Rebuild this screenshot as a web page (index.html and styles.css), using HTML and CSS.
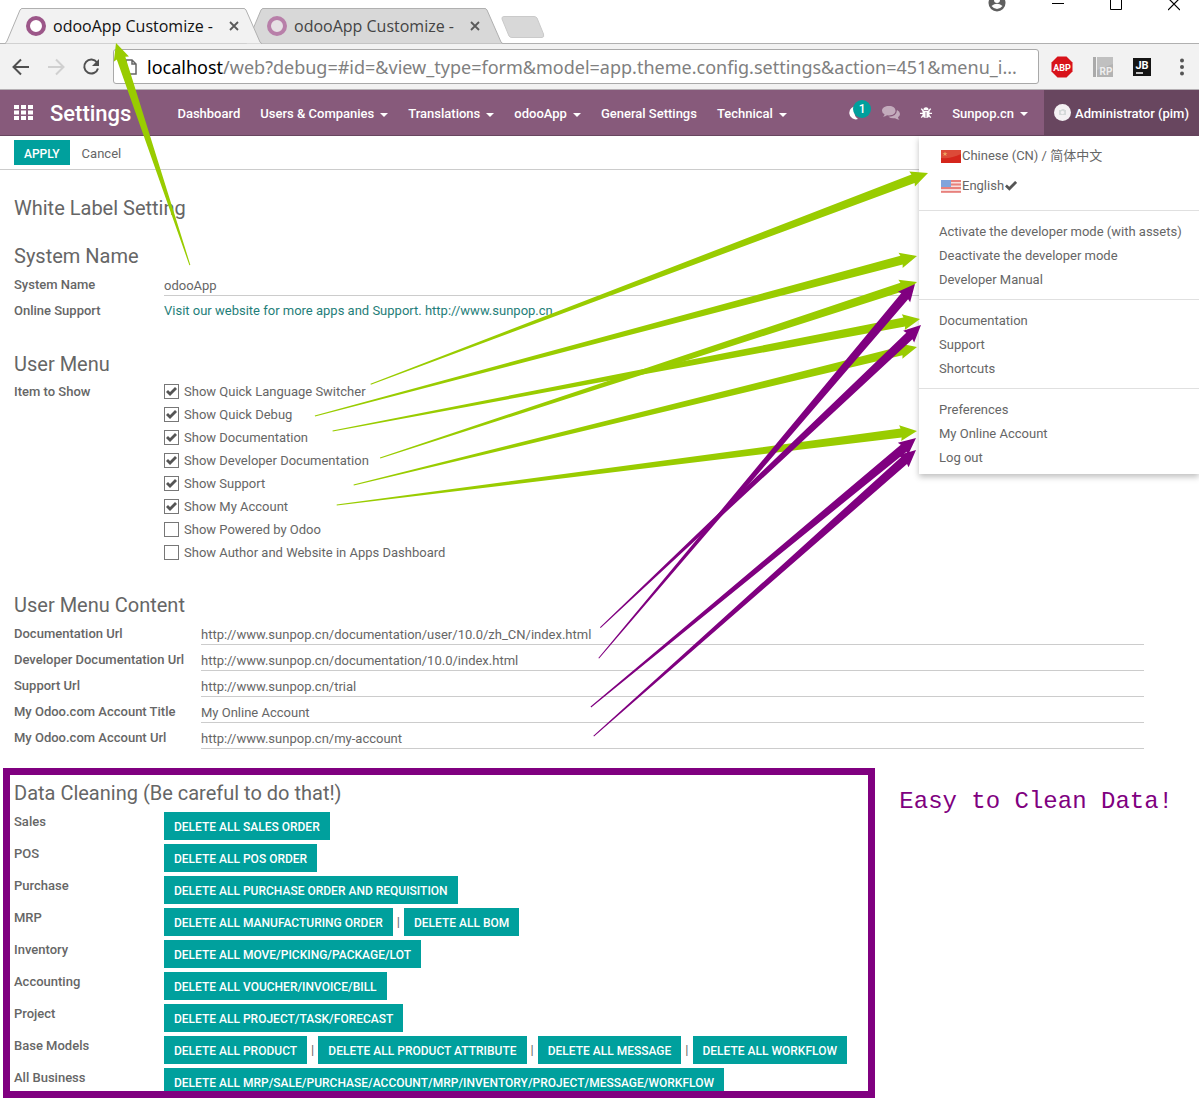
FILE: index.html
```html
<!DOCTYPE html>
<html lang="en">
<head>
<meta charset="utf-8">
<title>odooApp Customize - Settings</title>
<link rel="stylesheet" href="styles.css">
</head>
<body>
<svg width="0" height="0" class="defs" aria-hidden="true">
  <symbol id="tab-shape" viewBox="0 0 257 44" preserveAspectRatio="none"><path d="M0 43.500Q1 43 2 41L15 10Q16 8.500 17 8.500H239Q240 8.500 241 10L255 42Q256 43.500 257 43.500"/></symbol>
  <symbol id="close-x" viewBox="0 0 10 10"><path d="M1 1L9 9M9 1L1 9" fill="none" stroke="#5a5a5a" stroke-width="1.800"/></symbol>
</svg>

<header class="browser">
  <div class="tabstrip">
    <div class="tab tab-active">
      <svg class="tab-bg" aria-hidden="true"><use href="#tab-shape"/></svg>
      <span class="ring"></span><span class="tab-title">odooApp Customize -</span>
      <button class="tab-close" aria-label="Close tab"><svg width="10" height="10"><use href="#close-x"/></svg></button>
    </div>
    <div class="tab">
      <svg class="tab-bg" aria-hidden="true"><use href="#tab-shape"/></svg>
      <span class="ring ring-dim"></span><span class="tab-title">odooApp Customize -</span>
      <button class="tab-close" aria-label="Close tab"><svg width="10" height="10"><use href="#close-x"/></svg></button>
    </div>
    <button class="new-tab" aria-label="New tab"><svg width="44" height="22" viewBox="0 0 44 22"><path d="M3 .500H33Q35 .500 36 2L42.500 18Q43.500 21.500 41 21.500H11Q9 21.500 8 20L1 3Q.500 .500 3 .500Z" fill="#d8d8d8" stroke="#cacaca"/></svg></button>
    <div class="window-controls">
      <button aria-label="Profile"><svg width="18" height="22" viewBox="0 0 18 22"><circle cx="9" cy="3" r="8.500" fill="#5f5f5f"/><circle cx="9" cy="0" r="3" fill="#fff"/><path d="M3.500 6Q9 1.500 14.500 6Q12 9 9 9T3.500 6Z" fill="#fff"/></svg></button>
      <button aria-label="Minimize"><svg width="12" height="22" viewBox="0 0 12 22"><path d="M0 3.500H12" stroke="#000"/></svg></button>
      <button aria-label="Maximize"><svg width="12" height="22" viewBox="0 0 12 22"><path d="M.500 -2V9.500H11.500V-2" fill="none" stroke="#000"/></svg></button>
      <button aria-label="Close window"><svg width="12" height="22" viewBox="0 0 12 22"><path d="M0 -2L12 10M12 -2L0 10" stroke="#000" stroke-width="1.200"/></svg></button>
    </div>
  </div>
  <div class="toolbar">
    <button class="tool" aria-label="Back"><svg width="18" height="18" viewBox="0 0 18 18"><path d="M17 9H2M9 1.500L1.500 9L9 16.500" fill="none" stroke="#505050" stroke-width="2"/></svg></button>
    <button class="tool" aria-label="Forward"><svg width="18" height="18" viewBox="0 0 18 18"><path d="M1 9H16M9 1.500L16.500 9L9 16.500" fill="none" stroke="#d0d0d0" stroke-width="2"/></svg></button>
    <button class="tool" aria-label="Reload"><svg width="18" height="18" viewBox="0 0 18 18"><path d="M15 4.500A7 7 0 1 0 16 10.500" fill="none" stroke="#505050" stroke-width="2"/><path d="M17 1V8H10Z" fill="#505050"/></svg></button>
    <div class="address">
      <svg width="12" height="16" viewBox="0 0 12 16"><path d="M1 1H7L11 5V15H1ZM7 1V5H11" fill="none" stroke="#666" stroke-width="1.500"/></svg>
      <div class="url"><b>localhost</b>/web?debug=#id=&amp;view_type=form&amp;model=app.theme.config.settings&amp;action=451&amp;menu_i...</div>
    </div>
    <div class="extensions">
      <svg width="22" height="22" viewBox="0 0 22 22"><path d="M6.500 .500H15.500L21.500 6.500V15.500L15.500 21.500H6.500L.500 15.500V6.500Z" fill="#d8121a"/><text x="11" y="15" class="abp">ABP</text></svg>
      <svg width="22" height="22" viewBox="0 0 22 22"><path d="M1 1H4V21H1Z" fill="#aaa"/><path d="M5 1H21V21H5Z" fill="#b3b3b3"/><path d="M5 1H21V8L5 14Z" fill="#c0c0c0"/><text x="14" y="19" class="rp">RP</text></svg>
      <svg width="18" height="18" viewBox="0 0 18 18"><path d="M0 0H18V18H0Z" fill="#151515"/><text x="9" y="11" class="jb">JB</text><path d="M3 15H10" stroke="#fff" stroke-width="1.500"/></svg>
      <button class="tool more" aria-label="More"><svg width="4" height="18" viewBox="0 0 4 18"><circle cx="2" cy="2.500" r="2" fill="#555"/><circle cx="2" cy="9" r="2" fill="#555"/><circle cx="2" cy="15.500" r="2" fill="#555"/></svg></button>
    </div>
  </div>
</header>

<nav class="navbar">
  <button class="apps" aria-label="Apps"><svg width="19" height="15" viewBox="0 0 19 15" fill="#fff"><path d="M0 0H5V4H0ZM7 0H12V4H7ZM14 0H19V4H14ZM0 5.500H5V9.500H0ZM7 5.500H12V9.500H7ZM14 5.500H19V9.500H14ZM0 11H5V15H0ZM7 11H12V15H7ZM14 11H19V15H14Z"/></svg></button>
  <a class="brand" href="#">Settings</a>
  <ul class="menu">
    <li><a href="#">Dashboard</a></li>
    <li><a href="#" class="caret">Users &amp; Companies</a></li>
    <li><a href="#" class="caret">Translations</a></li>
    <li><a href="#" class="caret">odooApp</a></li>
    <li><a href="#">General Settings</a></li>
    <li><a href="#" class="caret">Technical</a></li>
  </ul>
  <div class="systray">
    <button class="activity" aria-label="Activities"><svg width="14" height="16" viewBox="0 0 14 16"><path d="M9 1.500A6.500 6.500 0 1 0 10 14A8 8 0 0 1 9 1.500Z" fill="#fff"/></svg><span class="badge">1</span></button>
    <button aria-label="Conversations"><svg width="18" height="14" viewBox="0 0 18 14" fill="#c3abbc"><path d="M7 0C11 0 13.500 2 13.500 4.700S11 9.400 7 9.400L5 9.200Q3.500 10.600 1 10.800Q2.500 9.600 2.500 8.300Q0 7 0 4.700C0 2 3 0 7 0Z"/><path d="M15 4Q18 5.500 18 8Q18 10 16 11.300Q16 12.600 17.500 13.700Q15 13.600 13 12.200Q9 12.800 6.500 10.800Q14.500 10.800 15 4Z"/></svg></button>
    <button aria-label="Debug"><svg width="12" height="13" viewBox="0 0 14 14"><path d="M4 4Q4 1 7 1T10 4Z" fill="#fff"/><path d="M3 5H11V9Q11 13.500 7 13.500T3 9Z" fill="#fff"/><path d="M1.500 2.500L4 5.500M12.500 2.500L10 5.500M0 8H14M1.500 13L4 10M12.500 13L10 10" stroke="#fff" stroke-width="1.600"/><path d="M7 6.500V13" stroke="#875a7b"/></svg></button>
    <a href="#" class="caret company">Sunpop.cn</a>
    <button class="user"><svg width="17" height="17" viewBox="0 0 17 17"><circle cx="8.500" cy="8.500" r="8.500" fill="#f4f1f3"/><path d="M5 6H7L8 5H10L11 6H12V11H5Z" fill="#d5d9d9"/><circle cx="8.500" cy="8.500" r="1.700" fill="#f4f1f3"/></svg><span>Administrator (pim)</span></button>
  </div>
  <div class="dropdown">
    <ul class="langs">
      <li><a href="#"><svg width="20" height="15" viewBox="0 0 20 15"><path d="M0 1H20V14H0Z" fill="#d5261c"/><path d="M0 1H20V5Q10 10 0 9Z" fill="#dc4a38"/><path d="M4 2.500L4.700 4.200H6.500L5 5.300L5.600 7L4 6L2.400 7L3 5.300L1.500 4.200H3.300Z" fill="#f0a860"/></svg>Chinese (CN) / 简体中文</a></li>
      <li><a href="#"><svg width="20" height="15" viewBox="0 0 20 15"><path d="M0 1H20V14H0Z" fill="#f7dedd"/><path d="M0 2H20M0 5.500H20M0 9H20M0 12.800H20" stroke="#e8807c" stroke-width="1.800"/><path d="M0 1H10V8H0Z" fill="#82a4dc"/></svg>English<svg width="12" height="11" viewBox="0 0 13 11"><path d="M1 4.500L4.700 8L12 .500" fill="none" stroke="#555" stroke-width="3"/></svg></a></li>
    </ul>
    <ul>
      <li><a href="#">Activate the developer mode (with assets)</a></li>
      <li><a href="#">Deactivate the developer mode</a></li>
      <li><a href="#">Developer Manual</a></li>
    </ul>
    <ul>
      <li><a href="#">Documentation</a></li>
      <li><a href="#">Support</a></li>
      <li><a href="#">Shortcuts</a></li>
    </ul>
    <ul>
      <li><a href="#">Preferences</a></li>
      <li><a href="#">My Online Account</a></li>
      <li><a href="#">Log out</a></li>
    </ul>
  </div>
</nav>

<div class="control-panel">
  <button class="btn btn-small">APPLY</button>
  <button class="btn-link">Cancel</button>
</div>

<main class="sheet">
  <h2>White Label Setting</h2>

  <section class="group first">
    <h2>System Name</h2>
    <div class="row"><label for="sysname">System Name</label><input id="sysname" type="text" value="odooApp"></div>
    <div class="row"><span class="label">Online Support</span><a class="link" href="#">Visit our website for more apps and Support. http://www.sunpop.cn</a></div>
  </section>

  <section class="group">
    <h2>User Menu</h2>
    <div class="row items">
      <span class="label">Item to Show</span>
      <div>
        <label class="check"><input type="checkbox" checked>Show Quick Language Switcher</label>
        <label class="check"><input type="checkbox" checked>Show Quick Debug</label>
        <label class="check"><input type="checkbox" checked>Show Documentation</label>
        <label class="check"><input type="checkbox" checked>Show Developer Documentation</label>
        <label class="check"><input type="checkbox" checked>Show Support</label>
        <label class="check"><input type="checkbox" checked>Show My Account</label>
        <label class="check"><input type="checkbox">Show Powered by Odoo</label>
        <label class="check"><input type="checkbox">Show Author and Website in Apps Dashboard</label>
      </div>
    </div>
  </section>

  <section class="group wide">
    <h2>User Menu Content</h2>
    <div class="row"><label for="doc">Documentation Url</label><input id="doc" type="text" value="http://www.sunpop.cn/documentation/user/10.0/zh_CN/index.html"></div>
    <div class="row"><label for="dev">Developer Documentation Url</label><input id="dev" type="text" value="http://www.sunpop.cn/documentation/10.0/index.html"></div>
    <div class="row"><label for="sup">Support Url</label><input id="sup" type="text" value="http://www.sunpop.cn/trial"></div>
    <div class="row"><label for="acct">My Odoo.com Account Title</label><input id="acct" type="text" value="My Online Account"></div>
    <div class="row"><label for="accu">My Odoo.com Account Url</label><input id="accu" type="text" value="http://www.sunpop.cn/my-account"></div>
  </section>
</main>

<div class="cleaning">
  <section class="box">
    <h2>Data Cleaning (Be careful to do that!)</h2>
    <div class="clean-row"><span class="label">Sales</span><div class="actions"><button class="btn">DELETE ALL SALES ORDER</button></div></div>
    <div class="clean-row"><span class="label">POS</span><div class="actions"><button class="btn">DELETE ALL POS ORDER</button></div></div>
    <div class="clean-row"><span class="label">Purchase</span><div class="actions"><button class="btn">DELETE ALL PURCHASE ORDER AND REQUISITION</button></div></div>
    <div class="clean-row"><span class="label">MRP</span><div class="actions"><button class="btn">DELETE ALL MANUFACTURING ORDER</button><span>|</span><button class="btn">DELETE ALL BOM</button></div></div>
    <div class="clean-row"><span class="label">Inventory</span><div class="actions"><button class="btn">DELETE ALL MOVE/PICKING/PACKAGE/LOT</button></div></div>
    <div class="clean-row"><span class="label">Accounting</span><div class="actions"><button class="btn">DELETE ALL VOUCHER/INVOICE/BILL</button></div></div>
    <div class="clean-row"><span class="label">Project</span><div class="actions"><button class="btn">DELETE ALL PROJECT/TASK/FORECAST</button></div></div>
    <div class="clean-row"><span class="label">Base Models</span><div class="actions"><button class="btn">DELETE ALL PRODUCT</button><span>|</span><button class="btn">DELETE ALL PRODUCT ATTRIBUTE</button><span>|</span><button class="btn">DELETE ALL MESSAGE</button><span>|</span><button class="btn">DELETE ALL WORKFLOW</button></div></div>
    <div class="clean-row"><span class="label">All Business</span><div class="actions"><button class="btn">DELETE ALL MRP/SALE/PURCHASE/ACCOUNT/MRP/INVENTORY/PROJECT/MESSAGE/WORKFLOW</button></div></div>
  </section>
  <p class="note">Easy to Clean Data!</p>
</div>

<!-- Annotation arrows: each is drawn with its tip at the origin, tapering back to the tail -->
<svg class="arrows" width="1199" height="760" viewBox="0 0 1199 760" aria-hidden="true">
  <g fill="#99cc00">
    <path transform="translate(116 43) rotate(-108.400)" d="M0 0L-17 -8L-16 -4.500L-234 -.500V.500L-16 4.500L-17 8Z"/>
    <path transform="translate(928 173) rotate(-20.750)" d="M0 0L-17 -8L-16 -4.500L-596 -.500V.500L-16 4.500L-17 8Z"/>
    <path transform="translate(917 256) rotate(-14.880)" d="M0 0L-17 -8L-16 -4.500L-623 -.500V.500L-16 4.500L-17 8Z"/>
    <path transform="translate(920 319) rotate(-10.800)" d="M0 0L-17 -8L-16 -4.500L-598 -.500V.500L-16 4.500L-17 8Z"/>
    <path transform="translate(917 282) rotate(-18.150)" d="M0 0L-17 -8L-16 -4.500L-565 -.500V.500L-16 4.500L-17 8Z"/>
    <path transform="translate(917 347) rotate(-13.770)" d="M0 0L-17 -8L-16 -4.500L-580 -.500V.500L-16 4.500L-17 8Z"/>
    <path transform="translate(917 431) rotate(-7.270)" d="M0 0L-17 -8L-16 -4.500L-585 -.500V.500L-16 4.500L-17 8Z"/>
  </g>
  <g fill="#800080">
    <path transform="translate(915 284) rotate(-49.800)" d="M0 0L-17 -8L-16 -4.500L-490 -.500V.500L-16 4.500L-17 8Z"/>
    <path transform="translate(921 325) rotate(-43.350)" d="M0 0L-17 -8L-16 -4.500L-441 -.500V.500L-16 4.500L-17 8Z"/>
    <path transform="translate(916 438) rotate(-39.600)" d="M0 0L-17 -8L-16 -4.500L-422 -.500V.500L-16 4.500L-17 8Z"/>
    <path transform="translate(916 450) rotate(-41.600)" d="M0 0L-17 -8L-16 -4.500L-431 -.500V.500L-16 4.500L-17 8Z"/>
  </g>
</svg>
</body>
</html>
```
FILE: styles.css
```css
* { box-sizing: border-box; }
body {
  position: relative;
  margin: 0;
  background: #fff;
  color: #666;
  font: 13px/18px Roboto, "Noto Sans CJK SC", sans-serif;
}
button { border: 0; padding: 0; background: none; color: inherit; font: inherit; }
svg { display: block; flex: none; }
ul { list-style: none; margin: 0; padding: 0; }
a { color: inherit; text-decoration: none; }
h2 { margin: 0 0 4px; font-size: 20px; line-height: 24px; font-weight: 400; color: #666; }
.defs { position: absolute; }

/* Browser window */
.browser { font-family: "Noto Sans", "Open Sans", sans-serif; }
.tabstrip { display: flex; height: 44px; padding-left: 5px; border-bottom: 1px solid #b0b0b0; }
.tab {
  position: relative;
  z-index: 0;
  display: flex;
  align-items: center;
  width: 257px;
  height: 44px;
  margin-right: -16px;
  padding: 8px 22px 0 21px;
}
.tab-active { z-index: 1; }
.tab-bg { position: absolute; inset: 0; width: 100%; height: 100%; z-index: -1; fill: #d8d8d8; stroke: #b0b0b0; }
.tab-active .tab-bg { fill: #f2f2f2; }
.ring { flex: none; width: 20px; height: 20px; border: 4px solid #9c5789; border-radius: 50%; background: #fff; }
.ring-dim { border-color: #b87fa9; background: #e6e0e4; }
.tab-title {
  width: 164px;
  margin: 0 12px 0 7px;
  white-space: nowrap;
  font-family: "Open Sans", sans-serif;
  font-size: 16px;
  line-height: 24px;
  color: #444;
}
.tab-active .tab-title { color: #111; }
.new-tab { align-self: flex-start; margin: 16px 0 0 14px; }
.window-controls { display: flex; align-items: flex-start; gap: 46px; margin-left: auto; padding-right: 19px; }
.toolbar {
  display: flex;
  align-items: center;
  height: 46px;
  padding: 0 15px 0 12px;
  background: #f2f2f2;
  border-bottom: 1px solid #b5b0b4;
}
.tool { margin-right: 17px; }
.tool:nth-child(3) { margin-right: 13px; }
.address {
  flex: 1;
  min-width: 0;
  display: flex;
  align-items: center;
  gap: 10px;
  height: 35px;
  padding: 0 8px 0 11px;
  border: 1px solid #a9a9a9;
  border-radius: 3px;
  background: #fff;
}
.url { overflow: hidden; white-space: nowrap; font-size: 18px; line-height: 28px; color: #808080; }
.url b { font-weight: 400; color: #000; }
.extensions { display: flex; align-items: center; gap: 19px; padding-left: 12px; }
.more { margin: 0 0 0 10px; }
.abp { font: bold 9px Roboto, sans-serif; fill: #fff; text-anchor: middle; }
.rp { font: bold 10px Roboto, sans-serif; fill: #eee; text-anchor: middle; }
.jb { font: bold 11px Roboto, sans-serif; fill: #fff; text-anchor: middle; }

/* Application bar */
.navbar {
  position: relative;
  z-index: 2;
  display: flex;
  align-items: center;
  height: 46px;
  padding-left: 14px;
  background: #875a7b;
  border-bottom: 1px solid #68465f;
  color: #fff;
  font-weight: 500;
}
.brand { margin: 0 36px 0 17px; padding-top: 2px; font-size: 22px; line-height: 28px; }
.menu, .systray, .systray > * { display: flex; align-items: center; }
.menu { white-space: nowrap; }
.menu a { display: block; padding: 2px 10px 0; }
.caret::after {
  content: "";
  display: inline-block;
  margin-left: 6px;
  border: 4px solid transparent;
  border-top-color: #fff;
  border-bottom: 0;
  vertical-align: 1px;
}
.systray { align-self: stretch; margin-left: auto; gap: 20px; white-space: nowrap; }
.company, .user span { padding-top: 2px; }
.activity { position: relative; width: 14px; }
.badge {
  position: absolute;
  left: 5px;
  bottom: 3px;
  width: 18px;
  height: 18px;
  border-radius: 50%;
  background: #00a09d;
  font-size: 12px;
  line-height: 18px;
  text-align: center;
}
.user { align-self: stretch; gap: 4px; padding: 0 10px; margin-left: -4px; background: #68465f; }
.dropdown {
  position: absolute;
  top: 46px;
  right: 0;
  width: 280px;
  background: #fff;
  color: #666;
  font-weight: 400;
  box-shadow: 0 3px 6px rgba(0, 0, 0, .25);
}
.dropdown ul { padding: 9px 0 7px; border-top: 1px solid #e0e0e0; }
.dropdown .langs { padding: 5px 0 9px; border-top: 0; }
.dropdown ul:last-child { padding-bottom: 4px; }
.dropdown a { display: flex; align-items: center; height: 24px; padding: 0 20px; white-space: nowrap; }
.dropdown .langs a { height: 30px; padding-left: 22px; gap: 1px; }

.control-panel {
  display: flex;
  align-items: center;
  gap: 12px;
  height: 34px;
  padding-left: 14px;
  border-bottom: 1px solid #ccc;
}
.btn {
  height: 28px;
  padding: 2px 10px 0;
  background: #00a09d;
  color: #fff;
  font-size: 12px;
  line-height: 18px;
  font-weight: 500;
  white-space: nowrap;
}
.btn-small { height: 25px; }
.btn-link { padding-top: 2px; }

/* Form */
.sheet { padding: 26px 55px 17px 14px; }
.group { margin-top: 28px; }
.group.first { margin-top: 24px; }
.group.wide { margin-top: 29px; }
.row { display: grid; grid-template-columns: 150px 1fr; align-items: center; min-height: 26px; }
.wide .row { grid-template-columns: 187px 1fr; }
.items { align-items: start; }
.items > .label { line-height: 23px; }
.row > label, .label { font-weight: 500; }
.row > input {
  width: 100%;
  height: 22px;
  padding: 2px 0 0;
  border: 0;
  border-bottom: 1px solid #ccc;
  outline: 0;
  background: none;
  color: #666;
  font: inherit;
}
.link { color: #1f7e79; }
.check { display: flex; align-items: center; gap: 5px; height: 23px; }
.check input {
  appearance: none;
  width: 15px;
  height: 15px;
  margin: 0;
  border: 1px solid #777;
  background: #fff;
}
.check input:checked::before {
  content: "";
  display: block;
  height: 13px;
  background: #555;
  clip-path: polygon(1px 7px, 3px 5px, 5px 7px, 10px 2px, 12px 4px, 5px 11px);
}

/* Data cleaning */
.cleaning { display: flex; align-items: flex-start; padding: 0 0 4px 3px; }
.box { flex: 1; min-width: 0; padding: 6px 4px 0; border: 7px solid #800080; overflow: hidden; }
.clean-row { display: grid; grid-template-columns: 150px 1fr; align-items: start; height: 32px; padding-top: 3px; }
.clean-row:last-child { margin-bottom: -6px; }
.clean-row .label { padding-top: 1px; }
.actions { display: flex; align-items: center; gap: 4px; }
.note {
  margin: 0;
  padding: 18px 26px 0 24px;
  color: #800080;
  font: 24px/32px "Liberation Mono", monospace;
  white-space: nowrap;
}
.arrows { position: absolute; top: 0; left: 0; z-index: 3; pointer-events: none; }
```
